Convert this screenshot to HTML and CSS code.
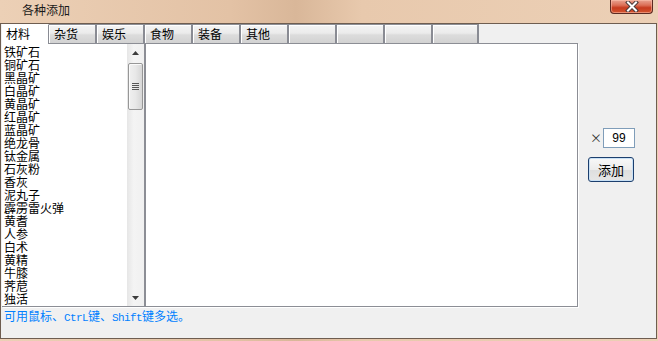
FILE: index.html
```
<!DOCTYPE html>
<html lang="zh">
<head>
<meta charset="utf-8">
<link rel="stylesheet" href="styles.css">
</head>
<body>
<div class="window">
  <div class="titlebar">
    <span class="title">各种添加</span>
    <div class="close"><svg width="16" height="11" viewBox="0 0 16 11"><path d="M4 1.5 L12 9.5 M12 1.5 L4 9.5" stroke="#4a3a3a" stroke-width="4" stroke-linecap="square"/><path d="M4 1.5 L12 9.5 M12 1.5 L4 9.5" stroke="#ffffff" stroke-width="2" stroke-linecap="square"/></svg></div>
  </div>
  <div class="client">
    <div class="main">
      <div class="left">
        <div class="tabs">
          <div class="tab active">材料</div>
          <div class="tab">杂货</div>
          <div class="tab">娱乐</div>
          <div class="tab">食物</div>
          <div class="tab">装备</div>
          <div class="tab">其他</div>
          <div class="tab"></div>
          <div class="tab"></div>
          <div class="tab"></div>
          <div class="tab last"></div>
        </div>
        <div class="panel">
          <div class="listbox">
            <ul class="items">
              <li>铁矿石</li><li>铜矿石</li><li>黑晶矿</li><li>白晶矿</li><li>黄晶矿</li>
              <li>红晶矿</li><li>蓝晶矿</li><li>绝龙骨</li><li>钛金属</li><li>石灰粉</li>
              <li>香灰</li><li>泥丸子</li><li>霹雳雷火弹</li><li>黄耆</li><li>人参</li>
              <li>白术</li><li>黄精</li><li>牛膝</li><li>荠苨</li><li>独活</li>
            </ul>
            <div class="scrollbar">
              <div class="sbtn"><svg width="7" height="4" viewBox="0 0 7 4"><path d="M0 4 L3.5 0 L7 4 Z" fill="#3c3c3c"/></svg></div>
              <div class="track">
                <div class="thumb"><div class="grip"></div><div class="grip"></div><div class="grip"></div><div class="grip"></div></div>
              </div>
              <div class="sbtn"><svg width="7" height="4" viewBox="0 0 7 4"><path d="M0 0 L7 0 L3.5 4 Z" fill="#3c3c3c"/></svg></div>
            </div>
          </div>
        </div>
      </div>
      <div class="side">
        <div class="qty"><span class="times">×</span><span class="input">99</span></div>
        <div class="button">添加</div>
      </div>
    </div>
    <div class="status">可用鼠标、<span class="lat">CtrL</span>键、<span class="lat">Shift</span>键多选。</div>
  </div>
</div>
</body>
</html>
```

FILE: styles.css
```
html, body {
  margin: 0;
  padding: 0;
}
body {
  width: 658px;
  height: 341px;
  overflow: hidden;
  background: #e6c7ab;
  font-family: "Noto Sans CJK SC", "Liberation Sans", sans-serif;
  font-size: 12px;
  color: #000;
}
.window {
  width: 658px;
  height: 341px;
  display: flex;
  flex-direction: column;
  background: linear-gradient(90deg, #ecd0b6 0%, #e3c2a5 35%, #d9b799 45%, #e8c9ad 55%, #ecd0b6 100%);
}
.titlebar {
  height: 23px;
  flex: none;
  display: flex;
  align-items: flex-start;
  position: relative;
}
.title {
  margin-left: 22px;
  margin-top: 2px;
  line-height: 16px;
  font-size: 12px;
  color: #1a1a1a;
}
.close {
  position: absolute;
  left: 610px;
  top: 0;
  width: 43px;
  height: 14px;
  box-sizing: border-box;
  border: 1px solid #5b2b22;
  border-top: none;
  border-radius: 0 0 4px 4px;
  background: linear-gradient(#e9a391 0%, #dc7058 40%, #c63b1f 60%, #d4552f 100%);
  box-shadow: inset 0 0 0 1px rgba(255,200,180,0.5);
  display: flex;
  align-items: center;
  justify-content: center;
}
.client {
  width: 657px;
  height: 316px;
  box-sizing: border-box;
  border: 1px solid #6e5d50;
  background: #f0f0f0;
  display: flex;
  flex-direction: column;
}
.main {
  display: flex;
}
.left {
  margin-left: 1px;
  width: 576px;
  display: flex;
  flex-direction: column;
}
.tabs {
  display: flex;
  height: 19px;
}
.tab {
  width: 48px;
  height: 19px;
  box-sizing: border-box;
  border-top: 1px solid #8d8f96;
  border-right: 2px solid #898b93;
  background: linear-gradient(#f4f4f4 0%, #ebebeb 45%, #dcdcdc 55%, #d2d2d2 100%);
  box-shadow: inset 1px 1px 0 #ffffff;
  padding-left: 5px;
  line-height: 17px;
  font-size: 12px;
}
.tab.active {
  width: 47px;
  background: #ffffff;
  border-top: 1px solid #ffffff;
  border-right: 1px solid #898b93;
  box-shadow: none;
  height: 20px;
  position: relative;
  z-index: 1;
  padding-left: 4px;
}
.tab.last {
  width: 46px;
}
.panel {
  height: 264px;
  box-sizing: border-box;
  border: 1px solid #8c8e95;
  border-left: none;
  background: #ffffff;
  box-shadow: 1px 1px 0 #ffffff;
}
.listbox {
  width: 142px;
  height: 262px;
  display: flex;
  border-right: 2px solid #8c8e95;
}
.items {
  list-style: none;
  margin: 0;
  padding: 1px 0 0 2px;
  flex: 1;
  overflow: hidden;
}
.items li {
  height: 13px;
  line-height: 13px;
  font-size: 12px;
  white-space: nowrap;
}
.scrollbar {
  width: 17px;
  display: flex;
  flex-direction: column;
  background: linear-gradient(90deg, #e6e6e6, #f4f4f4 40%, #f0f0f0);
}
.sbtn {
  height: 17px;
  display: flex;
  align-items: center;
  justify-content: center;
}
.track {
  flex: 1;
  padding-top: 2px;
}
.thumb {
  margin: 0 1px;
  height: 47px;
  box-sizing: border-box;
  border: 1px solid #979797;
  border-radius: 2px;
  background: linear-gradient(90deg, #f0f0f0, #e8e8e8 50%, #d6d6d6);
  box-shadow: inset 1px 1px 0 #fafafa;
  display: flex;
  flex-direction: column;
  align-items: center;
  justify-content: center;
  gap: 1px;
}
.grip {
  width: 7px;
  height: 1px;
  background: #555;
}
.side {
  flex: 1;
  display: flex;
  flex-direction: column;
  padding-top: 104px;
  padding-left: 12px;
}
.qty {
  display: flex;
  align-items: center;
  height: 20px;
}
.times {
  width: 13px;
  font-size: 12px;
  color: #333;
  line-height: 12px;
}
.input {
  width: 32px;
  height: 20px;
  box-sizing: border-box;
  border: 1px solid #7f9db9;
  background: #fff;
  text-align: center;
  line-height: 18px;
  font-family: "Liberation Sans", sans-serif;
  font-size: 12px;
}
.button {
  margin-top: 9px;
  margin-left: -2px;
  width: 46px;
  height: 25px;
  box-sizing: border-box;
  border: 1px solid #1c3f6e;
  border-radius: 3px;
  background: linear-gradient(#f8f8f8, #ececec 50%, #dedede 51%, #e6e6e6);
  box-shadow: inset 0 0 0 1px #c8e0f5;
  text-align: center;
  line-height: 23px;
  font-size: 13px;
}
.status {
  margin-top: 2px;
  padding-left: 3px;
  color: #0080ff;
  font-size: 12px;
  line-height: 14px;
  white-space: nowrap;
}
.lat {
  font-family: "Liberation Mono", monospace;
  font-size: 11px;
  letter-spacing: -0.6px;
}
```
